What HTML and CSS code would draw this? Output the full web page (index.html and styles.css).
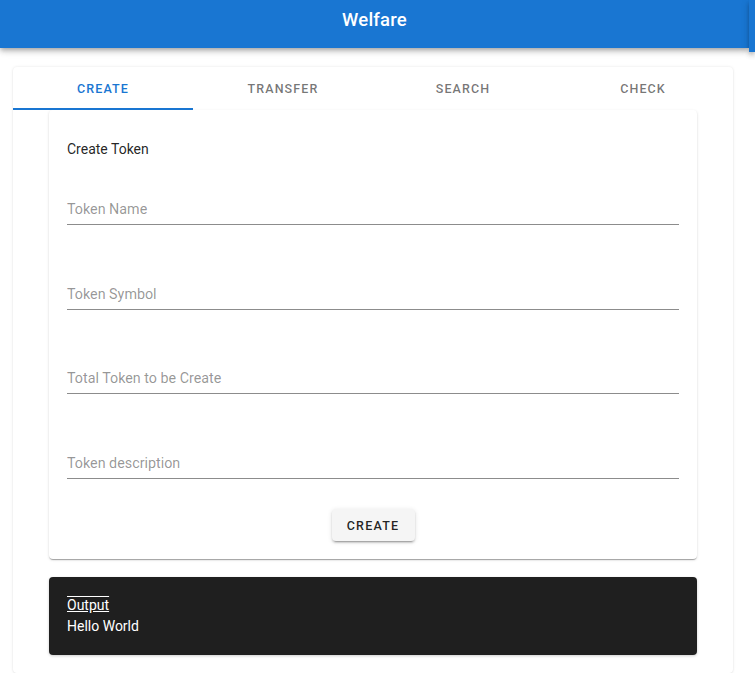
FILE: index.html
```html
<!DOCTYPE html>
<html lang="en">
<head>
<meta charset="utf-8">
<title>Welfare</title>
<link rel="stylesheet" href="styles.css">
</head>
<body>
<header class="header">
  <div class="appbar"><h1 class="title">Welfare</h1></div>
  <div class="appbar-edge"></div>
</header>
<main class="main">
  <section class="outer-card">
    <nav class="tabs">
      <div class="tab active">Create</div>
      <div class="tab">Transfer</div>
      <div class="tab">Search</div>
      <div class="tab">Check</div>
    </nav>
    <div class="panel">
      <div class="form-card">
        <div class="form-title">Create Token</div>
        <div class="fields">
          <label class="field"><span class="field-label">Token Name</span></label>
          <label class="field"><span class="field-label">Token Symbol</span></label>
          <label class="field"><span class="field-label">Total Token to be Create</span></label>
          <label class="field"><span class="field-label">Token description</span></label>
        </div>
        <div class="actions"><button class="btn" type="button">Create</button></div>
      </div>
      <div class="output">
        <div class="output-title">Output</div>
        <div class="output-text">Hello World</div>
      </div>
    </div>
  </section>
</main>
</body>
</html>
```
FILE: styles.css
```css
* { box-sizing: border-box; }
html, body { margin: 0; padding: 0; background: #fff; }
body {
  font-family: Roboto, "Noto Sans", Arial, sans-serif;
  color: rgba(0,0,0,0.87);
  width: 755px;
}
.header {
  display: flex;
  align-items: flex-start;
  height: 48px;
  position: relative;
  z-index: 2;
}
.appbar {
  flex: 1;
  height: 48px;
  background: #1976d2;
  box-shadow: 0 2px 4px -1px rgba(0,0,0,0.2), 0 4px 5px 0 rgba(0,0,0,0.14), 0 1px 10px 0 rgba(0,0,0,0.12);
  padding-top: 8px;
  text-align: center;
}
.appbar-edge {
  width: 6px;
  height: 52px;
  flex-shrink: 0;
  background: #1976d2;
  box-shadow: 0 2px 4px -1px rgba(0,0,0,0.2), 0 4px 5px 0 rgba(0,0,0,0.14), 0 1px 10px 0 rgba(0,0,0,0.12);
}
.title {
  margin: 0;
  font-size: 18.5px;
  line-height: 24px;
  font-weight: 500;
  color: #fff;
  letter-spacing: 0.2px;
}
.main {
  padding: 19px 0 0 13px;
}
.outer-card {
  width: 720px;
  background: #fff;
  border-radius: 4px;
  box-shadow: 0 0 3px rgba(0,0,0,0.10), 0 1px 2px rgba(0,0,0,0.06);
  padding-bottom: 18px;
}
.tabs {
  display: grid;
  grid-template-columns: repeat(4, 1fr);
  height: 43px;
}
.tab {
  display: flex;
  align-items: center;
  justify-content: center;
  font-size: 12.5px;
  font-weight: 500;
  letter-spacing: 1.1px;
  text-transform: uppercase;
  color: rgba(0,0,0,0.55);
  border-bottom: 2px solid transparent;
  padding-top: 2px;
}
.tab.active {
  color: #1976d2;
  border-bottom-color: #1976d2;
}
.panel {
  padding: 0 36px;
}
.form-card {
  background: #fff;
  border-radius: 4px;
  box-shadow: 0 2px 1px -1px rgba(0,0,0,0.2), 0 1px 1px 0 rgba(0,0,0,0.14), 0 1px 3px 0 rgba(0,0,0,0.12);
  padding: 29px 18px 18px;
}
.form-title {
  font-size: 14px;
  line-height: 20px;
}
.fields {
  display: flex;
  flex-direction: column;
  gap: 17.7px;
}
.field {
  display: block;
  padding-top: 41px;
  padding-bottom: 5px;
  border-bottom: 1px solid rgba(0,0,0,0.45);
}
.field:first-child {
  padding-top: 40px;
}
.field-label {
  display: block;
  font-size: 14.3px;
  line-height: 20px;
  color: rgba(0,0,0,0.42);
}
.actions {
  display: flex;
  justify-content: center;
  margin-top: 30px;
}
.btn {
  width: 83px;
  height: 32px;
  border: none;
  border-radius: 4px;
  background: #f5f5f5;
  box-shadow: 0 3px 1px -2px rgba(0,0,0,0.2), 0 2px 2px 0 rgba(0,0,0,0.14), 0 1px 5px 0 rgba(0,0,0,0.12);
  font-family: Roboto, "Noto Sans", Arial, sans-serif;
  font-size: 12.5px;
  font-weight: 500;
  letter-spacing: 1.2px;
  text-transform: uppercase;
  color: rgba(0,0,0,0.87);
  padding: 0;
}
.output {
  margin-top: 18px;
  background: #1f1f1f;
  border-radius: 4px;
  box-shadow: 0 1px 3px rgba(0,0,0,0.2);
  padding: 18px;
  color: #fff;
  font-size: 14px;
  line-height: 21px;
}
.output-title {
  display: inline-block;
  text-decoration: underline overline;
}
```
